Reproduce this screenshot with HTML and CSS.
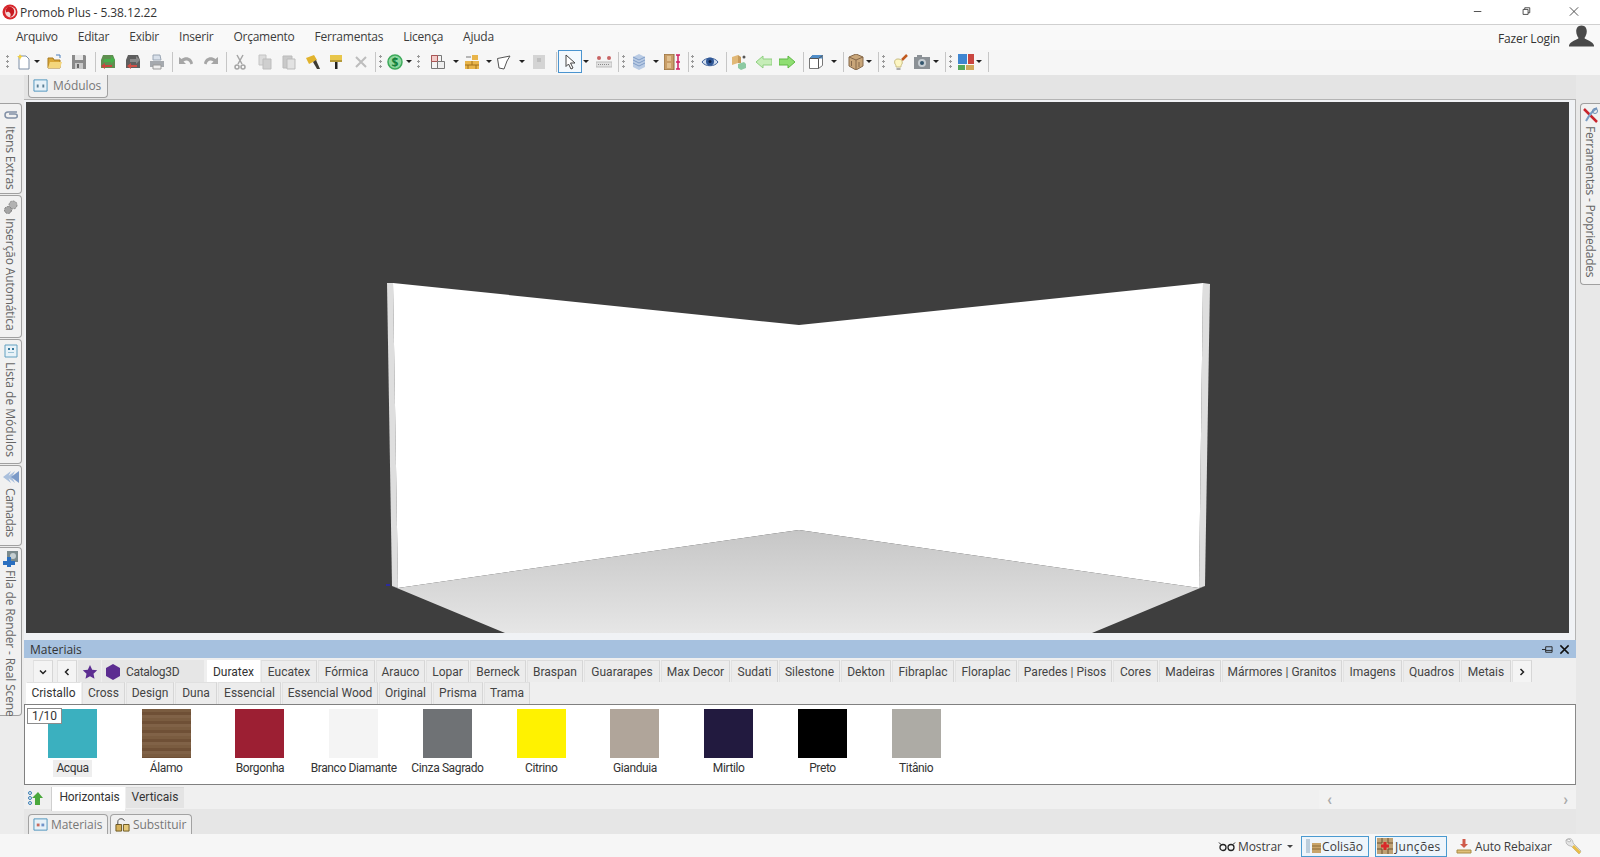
FILE: index.html
```html
<!DOCTYPE html>
<html lang="pt-BR">
<head>
<meta charset="utf-8">
<title>Promob Plus - 5.38.12.22</title>
<link rel="stylesheet" href="styles.css">
</head>
<body>
<header class="titlebar">
  <svg class="appicon" viewBox="0 0 16 16"><circle cx="8" cy="8" r="7.500" fill="#d8262c"/><circle cx="8.500" cy="8" r="5.400" fill="#f3d9d9"/><path d="M6 3c4-1 7 2 6 6-1 3-3 4-4 4 1-2 1-4-1-5-1-.5-2-.2-3 .5C3.600 6 4 4 6 3z" fill="#c61a20"/></svg>
  <span class="apptitle">Promob Plus - 5.38.12.22</span>
  <div class="winbtns">
    <svg viewBox="0 0 12 12"><path d="M1 6h9" stroke="#333" fill="none"/></svg>
    <svg viewBox="0 0 12 12"><path d="M2.500 3.500h6v6h-6zM4.500 3.500v-2h6v6h-2" stroke="#333" fill="none"/></svg>
    <svg viewBox="0 0 12 12"><path d="M1 1l10 10M11 1L1 11" stroke="#333" fill="none"/></svg>
  </div>
</header>

<nav class="menubar">
  <span>Arquivo</span><span>Editar</span><span>Exibir</span><span>Inserir</span><span>Orçamento</span><span>Ferramentas</span><span>Licença</span><span>Ajuda</span>
  <div class="login">
    <span>Fazer Login</span>
    <svg viewBox="0 0 26 22"><path d="M13 0c4 0 5.500 3 5.500 6 0 3-1.500 6-2.500 7 1 2 9 3 10 8v1H0v-1c1-5 9-6 10-8-1-1-2.500-4-2.500-7 0-3 1.500-6 5.500-6z" fill="#4a4a4a"/></svg>
  </div>
</nav>

<div class="toolbar">
  <i class="grip"></i>
  <svg class="ic m7" viewBox="0 0 16 16"><path d="M3 2h7l3 3v10H3z" fill="#fff" stroke="#7d8ea6"/><path d="M4 0l1 2 2 .5-2 1L4 6 3 3.500 1 2.500l2-.5z" fill="#f4d03a"/></svg><i class="dd m2"></i>
  <svg class="ic m7" viewBox="0 0 16 16"><path d="M1 4h5l1 2h6v8H1z" fill="#d9a637" stroke="#a87b20"/><path d="M3 8h12l-2 6H1z" fill="#f4d67c"/><path d="M9 1h4v3" stroke="#4a7fbd" fill="none"/></svg>
  <svg class="ic m8" viewBox="0 0 16 16"><path d="M1 1h13l1 1v13H1z" fill="#8a8a8a"/><path d="M4 1h8v5H4z" fill="#e6e6e6"/><path d="M4 9h8v6H4z" fill="#c9c9c9"/><path d="M6 10h2v4H6z" fill="#666"/></svg>
  <i class="sep m8"></i>
  <svg class="ic m4" viewBox="0 0 16 16"><path d="M3 1h10l2 5v8H1V6z" fill="#5f8f50"/><path d="M4 5h7V2l4 4-4 4V8H4z" fill="#46b04a"/><path d="M12 11H5V9l-4 3 4 3v-2h7z" fill="#c9473f"/></svg>
  <svg class="ic m9" viewBox="0 0 16 16"><path d="M3 1h10l2 5v8H1V6z" fill="#5e5e5e"/><path d="M5 5h6V2l4 4-4 4V8H5z" fill="#8a8a8a"/><path d="M12 11H6V9l-4 3 4 3v-2h6z" fill="#cf4f47"/></svg>
  <svg class="ic m8" viewBox="0 0 16 16"><path d="M4 1h7l1 5H4z" fill="#d8e0ea" stroke="#9aa6b4"/><path d="M1 7h14v6H1z" fill="#a5a9ae"/><path d="M4 11h8v4H4z" fill="#eee" stroke="#999"/></svg>
  <i class="sep m7"></i>
  <svg class="ic m5" viewBox="0 0 16 16"><path d="M1 3v7h7L5.500 7.500c3-2 6-1 7 3l2.500-1c-1-6-7-8-11.500-4.500z" fill="#a6a6a6"/></svg>
  <svg class="ic m9" viewBox="0 0 16 16"><path d="M15 3v7H8l2.500-2.500c-3-2-6-1-7 3L1 9.500c1-6 7-8 11.500-4.500z" fill="#a6a6a6"/></svg>
  <i class="sep m7"></i>
  <svg class="ic m5" viewBox="0 0 16 16"><path d="M5 1l5 9M11 1L6 10" stroke="#a5a5a5" stroke-width="1.500" fill="none"/><circle cx="5" cy="13" r="2" fill="none" stroke="#a5a5a5" stroke-width="1.500"/><circle cx="11" cy="13" r="2" fill="none" stroke="#a5a5a5" stroke-width="1.500"/></svg>
  <svg class="ic m9" viewBox="0 0 16 16"><path d="M2 1h7v10H2z" fill="#dcdcdc" stroke="#c4c4c4"/><path d="M6 5h8v10H6z" fill="#cfcfcf" stroke="#bdbdbd"/></svg>
  <svg class="ic m8" viewBox="0 0 16 16"><path d="M2 2h9v12H2z" fill="#c9c9c9" stroke="#bbb"/><path d="M6 5h8v10H6z" fill="#e2e2e2" stroke="#bbb"/></svg>
  <svg class="ic m8" viewBox="0 0 16 16"><path d="M1 4l8-3 3 5-8 4z" fill="#e1b32d"/><path d="M8 8l3-2 4 9-3 0z" fill="#3d3b34"/></svg>
  <svg class="ic m7" viewBox="0 0 16 16"><path d="M2 1h12v5H2z" fill="#e8c64a"/><path d="M2 6h12v2H2z" fill="#b59a3a"/><path d="M7 8h2.500v7H7z" fill="#222"/></svg>
  <svg class="ic m9" viewBox="0 0 16 16"><path d="M3 3l10 10M13 3L3 13" stroke="#bdbdbd" stroke-width="2" fill="none"/></svg>
  <i class="sep m6"></i><i class="grip m3"></i>
  <svg class="ic m5" viewBox="0 0 16 16"><circle cx="8" cy="8" r="7" fill="#8ed8a0" stroke="#3da95a" stroke-width="1.500"/><text class="glyph" x="8" y="12.500">$</text></svg><i class="dd m3"></i>
  <i class="grip m5"></i>
  <svg class="ic m10" viewBox="0 0 16 16"><path d="M1.500 1.500h10v13h-10z" fill="#f4f4f4" stroke="#777"/><path d="M1.500 1.500h6v6h-6z" fill="#f2cbc8" stroke="#a55"/><path d="M7.500 7.500h7v7h-7z" fill="#eee" stroke="#777"/></svg><i class="dd m7"></i>
  <svg class="ic m5" viewBox="0 0 16 16"><path d="M1 7h14v8H1z" fill="#e9b54a"/><path d="M8 1h6v5H8z" fill="#e9b54a"/><path d="M1 11h14M8 7v4M4 11v4M12 11v4" stroke="#a1701a" fill="none"/><path d="M2 3h5" stroke="#777"/></svg><i class="dd m6"></i>
  <svg class="ic m4" viewBox="0 0 16 16"><path d="M1.500 4.500L14 2l-3 5-3 8-5-1z" fill="#fff" stroke="#555"/></svg><i class="dd m7"></i>
  <svg class="ic m6" viewBox="0 0 16 16"><path d="M2 1h12v14H2z" fill="#d4d4d4"/><path d="M6 4h4v4H6z" fill="#bfbfbf"/></svg>
  <i class="sep m9"></i>
  <button class="tool-on m1" type="button"><svg class="ic" viewBox="0 0 16 16"><path d="M4 1l9 8H8.500l2.500 5-2 1-2.500-5L4 12.500z" fill="#fff" stroke="#444"/></svg></button><i class="dd m1"></i>
  <svg class="ic m7" viewBox="0 0 16 16"><path d="M0 8h16v5H0z" fill="#e2e2e2" stroke="#bbb"/><circle cx="3" cy="4" r="2" fill="#c86464"/><circle cx="13" cy="4" r="2" fill="#c86464"/><path d="M2 10.500h12" stroke="#888" stroke-dasharray="1 1"/></svg>
  <i class="sep m6"></i><i class="grip m3"></i>
  <svg class="ic m6" viewBox="0 0 16 16"><path d="M2 3l6-3 6 3v10l-6 3-6-3z" fill="#b9cbe4"/><path d="M2 6l6 3 6-3M2 9l6 3 6-3M2 3l6 3 6-3" stroke="#7f9cc6" fill="none"/></svg><i class="dd m6"></i>
  <svg class="ic wide m5" viewBox="0 0 18 16"><path d="M0 0h10v16H0z" fill="#c99e68" stroke="#8d6b3d"/><path d="M3 2h4v5H3zM3 9h4v5H3z" fill="#e1c08f"/><path d="M14 1v14M12 1h4M12 15h4M12 8h4" stroke="#cf1f62" stroke-width="1.500" fill="none"/></svg>
  <i class="sep m6"></i><i class="grip m2"></i>
  <svg class="ic wide m7" viewBox="0 0 18 16"><path d="M1 8c3-5 13-5 16 0-3 5-13 5-16 0z" fill="#cfdcee" stroke="#3c5f98"/><circle cx="9" cy="7.500" r="4" fill="#2f5797"/><circle cx="9" cy="7.500" r="1.500" fill="#10244a"/></svg>
  <i class="sep m7"></i>
  <svg class="ic m4" viewBox="0 0 16 16"><path d="M1 3l6-2v8l-6 2z" fill="#e1b877"/><path d="M7 1l3 2v6L7 9z" fill="#c69a5a"/><path d="M7 10l6-2 2 2v4l-5 2-3-2z" fill="#8cc9a2"/><circle cx="13" cy="3" r="1.500" fill="#555"/></svg>
  <svg class="ic m9" viewBox="0 0 16 16"><path d="M0 8l7-6v3h9v6H7v3z" fill="#c6edb8" stroke="#8fcf80"/></svg>
  <svg class="ic m7" viewBox="0 0 16 16"><path d="M16 8L9 2v3H0v6h9v3z" fill="#8fde72" stroke="#5fb845"/></svg>
  <i class="sep m8"></i>
  <svg class="ic m4" viewBox="0 0 16 16"><path d="M4.500 1.500h10v10l-4 3h-9v-10z" fill="#fff" stroke="#777"/><path d="M4.500 1h10v3.500h-13z" fill="#4f8dc9"/><path d="M10.500 4.500v10M10.500 4.500l4-3M1.500 4.500h9" stroke="#555" fill="none"/></svg><i class="dd m7"></i>
  <i class="sep m6"></i>
  <svg class="ic m4" viewBox="0 0 16 16"><path d="M8 0l7 3v9l-7 4-7-4V3z" fill="#c9a679" stroke="#85684a"/><path d="M1 3l7 3 7-3M8 6v10" stroke="#85684a" fill="none"/><path d="M3.500 7v5M11 8v5" stroke="#85684a"/></svg><i class="dd m2"></i>
  <i class="sep m6"></i><i class="grip m3"></i>
  <svg class="ic m7" viewBox="0 0 16 16"><path d="M6 5c3 0 5 2 4 5-1 1-1 2-1 3H4c0-1 0-2-1-3-1-3 0-5 3-5z" fill="#fdf6c2" stroke="#c8bc80"/><path d="M4.500 14h4v2h-4z" fill="#aaa"/><path d="M10 6l5-5" stroke="#c15a1f" stroke-width="2.500"/></svg>
  <svg class="ic m6" viewBox="0 0 16 16"><path d="M0 3h16v12H0z" fill="#8b9196"/><path d="M3 1h5v2H3z" fill="#8b9196"/><circle cx="8" cy="9" r="4" fill="#c7ced3"/><circle cx="8" cy="9" r="2" fill="#33566e"/></svg><i class="dd m3"></i>
  <i class="sep m6"></i><i class="grip m3"></i>
  <svg class="ic m6" viewBox="0 0 16 16"><path d="M0 0h9v10H0z" fill="#3f86d1"/><path d="M10 0h6v10h-6z" fill="#c94640"/><path d="M0 11h7v5H0z" fill="#55a85a"/><path d="M8 11h8v5H8z" fill="#d0a75a"/></svg><i class="dd m2"></i>
  <i class="sep m6"></i>
</div>

<div class="workspace">
  <aside class="lefttabs">
    <div class="vtab"><svg class="ic" viewBox="0 0 16 16"><path d="M14 5H5C1 5 1 11 5 11h7c3 0 3-4 0-4H6" fill="none" stroke="#8190a6" stroke-width="1.500"/></svg><span>Itens Extras</span></div>
    <div class="vtab"><svg class="ic" viewBox="0 0 16 16"><circle cx="10" cy="6" r="4" fill="#b2b2b2" stroke="#8c8c8c" stroke-dasharray="2 1"/><circle cx="5" cy="11" r="3.500" fill="#a5a5a5" stroke="#7c7c7c" stroke-dasharray="2 1"/></svg><span>Inserção Automática</span></div>
    <div class="vtab"><svg class="ic" viewBox="0 0 16 16"><path d="M2 2h12v12H2z" fill="#e8f2f8" stroke="#62a0c0"/><path d="M5 5h2v2H5zM9 5h2v2H9z" fill="#37789c"/><path d="M5 9h6v1H5z" fill="#9cc3d6"/></svg><span class="loose">Lista de Módulos</span></div>
    <div class="vtab"><svg class="ic" viewBox="0 0 16 16"><path d="M0 8l8-6-3 6 3 6zM4 8l8-6-3 6 3 6z" fill="#a9bfdc"/><path d="M8 8l8-6v12z" fill="#7b9ac7"/></svg><span class="tight">Camadas</span></div>
    <div class="vtab"><svg class="ic" viewBox="0 0 16 16"><path d="M4 0h11v11H4z" fill="#7a8a8c"/><circle cx="10" cy="5" r="3" fill="#c4cfd1"/><path d="M0 10h4V6h4v4h4v4H8v2H4v-2H0z" fill="#2a6fc0"/></svg><span>Fila de Render - Real Scene</span></div>
  </aside>

  <main class="center">
    <div class="doctabs top">
      <div class="doctab bottomtab"><svg class="ic small" viewBox="0 0 16 16"><path d="M1 2h14v12H1z" fill="#e6f1f8" stroke="#4d93bd"/><path d="M4 7h2v3H4zM10 7h2v3h-2z" fill="#5a7f95"/></svg><span>Módulos</span></div>
    </div>
    <div class="frame">
      <svg class="scene" viewBox="26 102 1543 531" preserveAspectRatio="none">
        <defs><linearGradient id="floor" x1="0" y1="0" x2="0" y2="1"><stop offset="0" stop-color="#c6c6c6"/><stop offset="1" stop-color="#e6e6e6"/></linearGradient></defs>
        <rect x="26" y="102" width="1543" height="531" fill="#3e3e3e"/>
        <path d="M387 283L393 283 398 588 392 586z" fill="#dedede"/>
        <path d="M1203 283L1210 284 1205 586 1199 588z" fill="#dedede"/>
        <path d="M393 283L799 325 1203 283 1199 588 799 530 398 588z" fill="#fff"/>
        <path d="M392 586L398 588 799 530 1199 588 1205 586 1092 633 505 633z" fill="url(#floor)"/>
        <rect x="386" y="584" width="4" height="2" fill="#2b2b9c"/>
      </svg>
    </div>
    <section class="panel">
      <div class="panelhead"><span>Materiais</span>
        <div class="panelctl">
          <svg viewBox="0 0 12 12"><path d="M0 6h4M4 3h7v6H4zM4 7h7" stroke="#222" fill="none"/></svg>
          <svg viewBox="0 0 12 12"><path d="M1.500 1.500l9 9M10.500 1.500l-9 9" stroke="#111" stroke-width="1.600" fill="none"/></svg>
        </div>
      </div>
      <div class="tabs row1">
        <div class="tab ctl"><svg class="chev" viewBox="0 0 8 8"><path d="M1 2.500l3 3 3-3" /></svg></div>
        <div class="tab ctl narrow"><svg class="chev" viewBox="0 0 8 8"><path d="M5.500 1l-3 3 3 3" /></svg></div>
        <div class="tab plain"><svg class="ic" viewBox="0 0 16 16"><path d="M8 1l2.200 4.700 5 .6-3.700 3.400 1 5L8 12.300 3.500 14.700l1-5L.8 6.300l5-.6z" fill="#5c2d91"/></svg></div>
        <div class="tab plain catalog"><svg class="ic" viewBox="0 0 16 16"><path d="M8 0l7 4v8l-7 4-7-4V4z" fill="#5c2d91"/></svg><span>Catalog3D</span></div>
        <div class="tab on">Duratex</div><div class="tab">Eucatex</div><div class="tab">Fórmica</div><div class="tab">Arauco</div><div class="tab">Lopar</div><div class="tab">Berneck</div><div class="tab">Braspan</div><div class="tab">Guararapes</div><div class="tab">Max Decor</div><div class="tab">Sudati</div><div class="tab">Silestone</div><div class="tab">Dekton</div><div class="tab">Fibraplac</div><div class="tab">Floraplac</div><div class="tab">Paredes | Pisos</div><div class="tab">Cores</div><div class="tab">Madeiras</div><div class="tab">Mármores | Granitos</div><div class="tab">Imagens</div><div class="tab">Quadros</div><div class="tab">Metais</div><div class="tab ctl"><svg class="chev" viewBox="0 0 8 8"><path d="M2.500 1l3 3-3 3" /></svg></div>
      </div>
      <div class="tabs row2">
        <div class="tab on">Cristallo</div><div class="tab">Cross</div><div class="tab">Design</div><div class="tab">Duna</div><div class="tab">Essencial</div><div class="tab">Essencial Wood</div><div class="tab">Original</div><div class="tab">Prisma</div><div class="tab">Trama</div>
      </div>
      <div class="gallery">
        <div class="pager">1/10</div>
        <figure class="mat"><div class="sw acqua"></div><figcaption class="sel">Acqua</figcaption></figure>
        <figure class="mat"><div class="sw alamo"></div><figcaption>Álamo</figcaption></figure>
        <figure class="mat"><div class="sw borgonha"></div><figcaption>Borgonha</figcaption></figure>
        <figure class="mat"><div class="sw branco"></div><figcaption>Branco Diamante</figcaption></figure>
        <figure class="mat"><div class="sw cinza"></div><figcaption>Cinza Sagrado</figcaption></figure>
        <figure class="mat"><div class="sw citrino"></div><figcaption>Citrino</figcaption></figure>
        <figure class="mat"><div class="sw gianduia"></div><figcaption>Gianduia</figcaption></figure>
        <figure class="mat"><div class="sw mirtilo"></div><figcaption>Mirtilo</figcaption></figure>
        <figure class="mat"><div class="sw preto"></div><figcaption>Preto</figcaption></figure>
        <figure class="mat"><div class="sw titanio"></div><figcaption>Titânio</figcaption></figure>
      </div>
      <div class="subtabs">
        <svg class="ic subicon" viewBox="0 0 16 16"><circle cx="2" cy="3" r="1.500" fill="none" stroke="#3a7fb5"/><circle cx="2" cy="8" r="1.500" fill="none" stroke="#3a7fb5"/><circle cx="2" cy="13" r="1.500" fill="none" stroke="#3a7fb5"/><path d="M10 2l5 6h-3v7H7V8H4z" fill="#4aa83c"/></svg>
        <div class="stab on">Horizontais</div><div class="stab">Verticais</div>
        <div class="hscroll"><span>&#8249;</span><span>&#8250;</span></div>
      </div>
    </section>
    <div class="doctabs bottom">
      <div class="doctab"><svg class="ic small" viewBox="0 0 16 16"><path d="M1 2h14v12H1z" fill="#e6f1f8" stroke="#4d93bd"/><path d="M4 7h3v3H4z" fill="#c96b5f"/><path d="M9 7h3v3H9z" fill="#6f93c9"/></svg><span>Materiais</span></div>
      <div class="doctab"><svg class="ic small" viewBox="0 0 16 16"><path d="M1 8h6v7H1z" fill="#d6b15b" stroke="#6a5520"/><path d="M9 8h6v7H9z" fill="#e5c878" stroke="#6a5520"/><path d="M3 8V5c0-4 6-4 7-1" fill="none" stroke="#444"/></svg><span>Substituir</span></div>
    </div>
  </main>

  <aside class="righttabs">
    <div class="vtab"><svg class="ic" viewBox="0 0 16 16"><path d="M1 2l13 13" stroke="#c8242c" stroke-width="2.500"/><path d="M14 1c-4 2-7 6-11 13" stroke="#7a9ec6" stroke-width="2" fill="none"/><circle cx="12" cy="4" r="2.500" fill="none" stroke="#6d8db3"/></svg><span>Ferramentas - Propriedades</span></div>
  </aside>
</div>

<footer class="statusbar">
  <div class="st mostrar"><svg viewBox="0 0 18 10"><path d="M1 1l2 2M17 1l-2 2" stroke="#222" fill="none"/><circle cx="5" cy="6" r="3" fill="none" stroke="#222" stroke-width="1.300"/><circle cx="13" cy="6" r="3" fill="none" stroke="#222" stroke-width="1.300"/></svg><span>Mostrar</span><i class="dd sm"></i></div>
  <div class="st toggled colisao"><svg class="ic" viewBox="0 0 16 16"><path d="M1 1v14M3 1v14" stroke="#8aa7bd"/><path d="M6 5h9v10H6z" fill="#c9a469"/><path d="M6 8h9M6 11h9" stroke="#8a6a39"/></svg><span>Colisão</span></div>
  <div class="st toggled juncoes"><svg class="ic" viewBox="0 0 16 16"><path d="M0 0h16v16H0z" fill="#bfa174"/><path d="M0 5h5V0M16 5h-5V0M0 11h5v5M16 11h-5v5" stroke="#6d5330" fill="none"/><path d="M6.500 4h3v2.500H12v3H9.500V12h-3V9.500H4v-3h2.500z" fill="#d92a2a"/></svg><span>Junções</span></div>
  <div class="st rebaixar"><svg class="ic" viewBox="0 0 16 16"><path d="M6.500 1h3v5H12l-4 4-4-4h2.500z" fill="#cf5a4a"/><path d="M1 12h14v3H1z" fill="#e0c079" stroke="#a88b45"/></svg><span>Auto Rebaixar</span></div>
  <svg class="wrench" viewBox="0 0 18 18"><path d="M1 3c2-2 5-2 6 0 1 1 1 3 1 3l8 8-2 3-8-8s-2 0-3-1C1 7 1 5 1 3l3 2 2-1-2-2z" fill="#e5e5e5" stroke="#bbb"/><path d="M9 8l7 7-2 2-7-7z" fill="#e9bd47"/></svg>
</footer>
</body>
</html>
```

FILE: styles.css
```css
* { box-sizing: border-box; }
html, body { margin: 0; padding: 0; }
body {
  width: 1600px; height: 857px; overflow: hidden;
  display: flex; flex-direction: column;
  font: 12px "Open Sans", "Noto Sans", sans-serif;
  color: #333; background: #e6e6e6;
}
i { display: block; flex: none; font-style: normal; }
.ic { width: 16px; height: 16px; flex: none; display: block; }
.ic.wide { width: 18px; }
.ic.small { width: 15px; height: 15px; }

.titlebar { height: 25px; flex: none; display: flex; align-items: center; background: #fff; border-bottom: 1px solid #d0d0d0; padding-left: 2px; }
.appicon { width: 16px; height: 16px; }
.apptitle { margin-left: 2px; font-size: 12px; letter-spacing: -.08px; color: #333; }
.winbtns { margin-left: auto; display: flex; }
.winbtns svg { width: 10px; height: 11px; margin: 0 21px 2px 17px; display: block; }

.menubar { height: 25px; flex: none; display: flex; align-items: center; background: #f9f9f9; padding: 0 0 2px 16px; font-size: 12px; letter-spacing: -.24px; color: #3c3c3c; }
.menubar > span { margin-right: 20px; }
.login { margin-left: auto; display: flex; align-items: center; padding: 4px 6px 0 0; color: #333; letter-spacing: -.15px; }
.login svg { width: 25px; height: 22px; margin: -6px 0 0 9px; }

.toolbar { height: 25px; flex: none; display: flex; align-items: center; background: #f6f6f6; padding: 0 0 2px 6px; }
.grip { width: 3px; height: 15px; background: radial-gradient(circle, #999 1px, transparent 1.2px) 0 0 / 3px 5px; }
.sep { width: 1px; height: 20px; background: #c6c6c6; }
.dd { height: 0; border: 3px solid transparent; border-top: 3px solid #222; border-bottom: 0; width: 6px; }
.dd.sm { border-top-color: #444; margin-left: 3px; }
.tool-on { width: 24px; height: 23px; padding: 0; display: flex; align-items: center; justify-content: center; background: #f4f9fd; border: 1px solid #4a94cf; }
.m1 { margin-left: 1px; } .m2 { margin-left: 2px; } .m3 { margin-left: 3px; } .m4 { margin-left: 4px; } .m5 { margin-left: 5px; }
.m6 { margin-left: 6px; } .m7 { margin-left: 7px; } .m8 { margin-left: 8px; } .m9 { margin-left: 9px; } .m10 { margin-left: 10px; }

.workspace { flex: 1; min-height: 0; display: flex; }
.lefttabs { width: 24px; flex: none; display: grid; grid-template-rows: 91px 143px 125px 81px 169px; row-gap: 1px; align-content: start; padding: 28px 2px 0 0; background: #ececec; }
.righttabs { width: 24px; flex: none; padding: 28px 0 0 4px; background: #e8e8e8; }
.vtab { display: flex; flex-direction: column; align-items: center; gap: 3px; padding-top: 3px; background: #f1f1f1; border: 1px solid #a0a0a0; border-left: 0; border-radius: 0 4px 4px 0; color: #666; }
.vtab span { writing-mode: vertical-rl; line-height: 19px; white-space: nowrap; font-size: 12px; letter-spacing: -.12px; }
.vtab span.loose { letter-spacing: 0; }
.vtab span.tight { letter-spacing: -.4px; }
.righttabs .vtab { height: 182px; border: 1px solid #a0a0a0; border-right: 0; border-radius: 4px 0 0 4px; }
.righttabs .vtab span { letter-spacing: -.2px; }

.center { flex: 1; min-width: 0; display: flex; flex-direction: column; }
.doctabs { flex: none; display: flex; padding-left: 4px; color: #777; font-size: 12px; letter-spacing: -.06px; }
.doctabs.top { height: 24px; background: #e4e4e4; }
.doctabs.bottom { height: 20px; background: #e6e6e6; gap: 2px; }
.doctab { height: 20px; display: flex; align-items: center; gap: 3px; padding: 0 4px; background: #f0f0f0; border: 1px solid #a2a2a2; border-bottom: 0; border-radius: 4px 4px 0 0; }
.doctabs.bottom .doctab:first-child { width: 80px; }
.doctabs.bottom .doctab:last-child { width: 82px; }
.doctab.bottomtab { width: 80px; height: 23px; padding-bottom: 2px; border: 1px solid #a2a2a2; border-top: 0; border-radius: 0 0 4px 4px; gap: 5px; }

.frame { height: 541px; flex: none; padding: 2px 6px 7px 2px; background: #f0f2f5; border: 1px solid #b4b4b4; border-width: 1px 1px 0 0; }
.scene { display: block; width: 100%; height: 100%; }

.panel { height: 174px; flex: none; display: flex; flex-direction: column; background: #efefef; }
.panelhead { height: 18px; flex: none; display: flex; align-items: center; justify-content: space-between; padding: 0 6px; background: #a6c1df; color: #333; font-size: 12px; }
.panelctl { display: flex; gap: 6px; }
.panelctl svg { width: 11px; height: 11px; display: block; }

.tabs { display: grid; flex: none; font-family: Roboto, "Open Sans", sans-serif; font-size: 12px; color: #444; }
.row1 { height: 24px; padding: 2px 0 0 9px; grid-template-columns: 24px 21px 24px 105px 54px 57px 58px 50px 44px 57px 57px 77px 70px 48px 62px 51px 63px 63px 95px 46px 63px 121px 60px 58px 51px 20px; }
.row2 { height: 22px; grid-template-columns: 56px 44px 49px 43px 64px 97px 54px 51px 47px; padding-left: 2px; }
.tab { display: flex; align-items: center; justify-content: center; margin-right: 1px; background: #ececec; border-top: 1px solid #dcdcdc; border-left: 1px solid #e2e2e2; border-right: 1px solid #d6d6d6; white-space: nowrap; }
.tab.on { background: #fff; color: #333; border-color: #fff; }
.tab.ctl { background: #f4f4f4; margin-right: 4px; }
.tab.ctl:last-child { margin-right: 0; }
.tab.narrow { margin-right: 1px; }
.tab.plain { background: #e6e6e6; border-color: #e6e6e6; margin-right: 1px; }
.tab.catalog { justify-content: flex-start; padding-left: 2px; gap: 5px; margin-right: 3px; letter-spacing: -.3px; }
.row2 .tab { border-top: 1px solid #e0e0e0; padding-bottom: 2px; }
.chev { width: 8px; height: 8px; display: block; }
.chev path { fill: none; stroke: #222; stroke-width: 1.500; }

.gallery { position: relative; height: 81px; flex: none; display: grid; grid-template-columns: repeat(10, 93.75px); padding: 4px 0 0 .6px; background: #fff; border: 1px solid #808080; border-right-color: #8a8a8a; font-family: Roboto, "Open Sans", sans-serif; }
.pager { position: absolute; left: 2px; top: 3px; width: 35px; height: 16px; display: flex; align-items: center; justify-content: center; background: #fff; border: 1px solid #8c8c8c; color: #333; z-index: 1; }
.mat { margin: 0; display: flex; flex-direction: column; align-items: center; }
.sw { width: 49px; height: 49px; flex: none; }
.mat figcaption { margin-top: 2px; padding: 0 2px; line-height: 17px; color: #333; white-space: nowrap; letter-spacing: -.38px; }
.mat figcaption.sel { background: #eee; padding: 0 3px; }
.acqua { background: #3bb0bf; }
.alamo { background: repeating-linear-gradient(180deg, #7a5c40 0 3px, #6f5036 3px 6px, #806247 6px 9px); }
.borgonha { background: #9c1f33; }
.branco { background: #f4f4f4; }
.cinza { background: #6f7275; }
.citrino { background: #fff200; }
.gianduia { background: #b0a59a; }
.mirtilo { background: #221a3f; }
.preto { background: #000; }
.titanio { background: #adaba5; }

.subtabs { flex: 1; display: flex; align-items: flex-start; padding-top: 2px; background: linear-gradient(#f0f0f0 0 24px, #e6e6e6 24px); font-family: Roboto, "Open Sans", sans-serif; font-size: 12px; color: #333; }
.subicon { margin: 3px 7px 0 4px; }
.stab { height: 21px; display: flex; align-items: center; justify-content: center; padding-bottom: 2px; }
.stab.on { width: 74px; background: #fff; height: 24px; padding: 0 0 5px 2px; border-left: 1px solid #cfcfcf; letter-spacing: -.1px; }
.stab:not(.on) { width: 58px; margin-left: 1px; background: #e4e4e4; border-top: 1px solid #dcdcdc; }
.hscroll { margin-left: auto; width: 257px; height: 19px; margin-top: 3px; display: flex; justify-content: space-between; align-items: center; padding: 0 8px; color: #aaa; font-size: 16px; font-weight: 700; background: #f2f2f2; }

.statusbar { height: 23px; flex: none; display: flex; align-items: center; padding-left: 1218px; background: #f6f6f6; color: #3c3c3c; font-size: 12px; letter-spacing: -.1px; }
.st { display: flex; align-items: center; height: 21px; margin-top: 1px; }
.mostrar { width: 83px; gap: 2px; }
.mostrar svg { width: 18px; height: 11px; }
.toggled { border: 1px solid #4a9ad0; background: #eef5fb; padding-left: 4px; gap: 0; margin-right: 6px; }
.colisao { width: 68px; letter-spacing: .1px; }
.juncoes { width: 72px; padding-left: 1px; gap: 2px; letter-spacing: .3px; }
.rebaixar { margin-left: 3px; width: 109px; gap: 3px; letter-spacing: -.15px; }
.wrench { width: 18px; height: 18px; flex: none; }
.glyph { font: 700 12px "Open Sans", sans-serif; fill: #13803a; text-anchor: middle; }
```
